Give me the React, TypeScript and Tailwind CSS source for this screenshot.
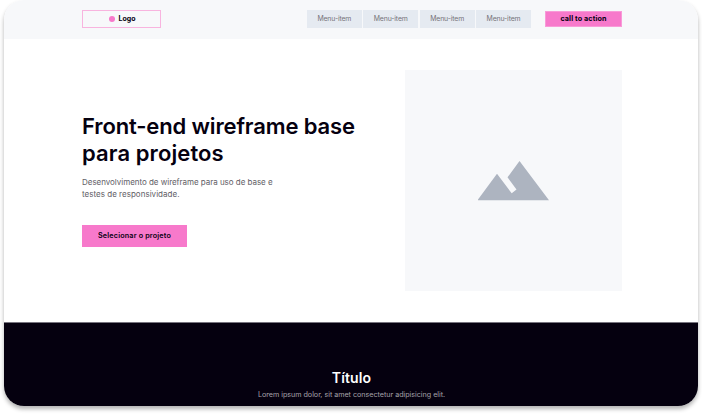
const menuItems = ["Menu-item", "Menu-item", "Menu-item", "Menu-item"];

function Header() {
  return (
    <header className="flex h-[39px] items-start bg-[#f7f8fa] pt-[10px] pr-[76px] pl-[78px]">
      <div className="flex h-[18px] w-[79px] items-center justify-center gap-[4px] border border-[#f8b4df] pb-px pl-px">
        <span className="mt-px size-[6px] rounded-full bg-[#f779cb]" />
        <span className="text-[7px] leading-none font-bold text-[#05000f]">Logo</span>
      </div>
      <nav className="ml-auto flex gap-[1.4px]">
        {menuItems.map((item, i) => (
          <a
            key={i}
            className="flex h-[18px] w-[55px] items-center justify-center bg-[#e5eaf1] text-[6.9px] leading-none tracking-[-0.15px] text-[#757379]"
          >
            {item}
          </a>
        ))}
      </nav>
      <button className="mt-[1px] ml-[14px] flex h-4 w-[77px] items-center justify-center border border-[#f99ad8] bg-[#f779cb] text-[7.2px] leading-none font-bold tracking-[0.11px] text-[#05000f]">
        call to action
      </button>
    </header>
  );
}

function Hero() {
  return (
    <main className="flex h-[283px] justify-between bg-white pt-[31px] pr-[76px] pl-[78px]">
      <section className="pt-[43px] whitespace-nowrap">
        <h1 className="text-[22px] leading-[27px] font-semibold text-[#05000f]">
          <span className="block tracking-[-0.14px]">Front-end wireframe base</span>
          <span className="block tracking-[0.1px]">para projetos</span>
        </h1>
        <p className="mt-[9px] text-[8px] leading-[12px] text-[#626066]">
          <span className="block tracking-[-0.03px]">Desenvolvimento de wireframe para uso de base e</span>
          <span className="block tracking-[0.02px]">testes de responsividade.</span>
        </p>
        <button className="mt-[25px] flex h-[22px] w-[105px] items-center justify-center bg-[#f779cb] text-[7.2px] leading-none font-semibold tracking-[0.18px] text-[#05000f]">
          Selecionar o projeto
        </button>
      </section>
      <div className="flex h-[221px] w-[217px] items-center justify-center bg-[#f7f8fa]">
        <svg className="h-[40px] w-[72px]" viewBox="0 0 72 40" fill="#adb4c0">
          <path d="M-0.5 39.2 19 12.8 33.7 32.3 38.5 28.5 29.5 16.3 41.5 0.1 71 39.2Z" />
        </svg>
      </div>
    </main>
  );
}

export default function App() {
  return (
    <div className="h-[414px] w-[702px] overflow-hidden bg-white px-[4px] font-['Inter',sans-serif]">
      <div className="h-[406px] w-[694px] overflow-hidden rounded-[20px] bg-white shadow-[0_3px_4px_rgba(0,0,0,0.3)]">
        <Header />
        <Hero />
        <section className="h-[84px] border-t border-[#77747e] bg-[#05000f] pt-[47px] pl-px text-center">
          <h2 className="text-[14px] leading-[16px] font-semibold tracking-[0.15px] text-white">Título</h2>
          <p className="mt-[4px] text-[7.2px] leading-[10px] tracking-[-0.03px] text-[#a5a3aa]">
            Lorem ipsum dolor, sit amet consectetur adipisicing elit.
          </p>
        </section>
      </div>
    </div>
  );
}
